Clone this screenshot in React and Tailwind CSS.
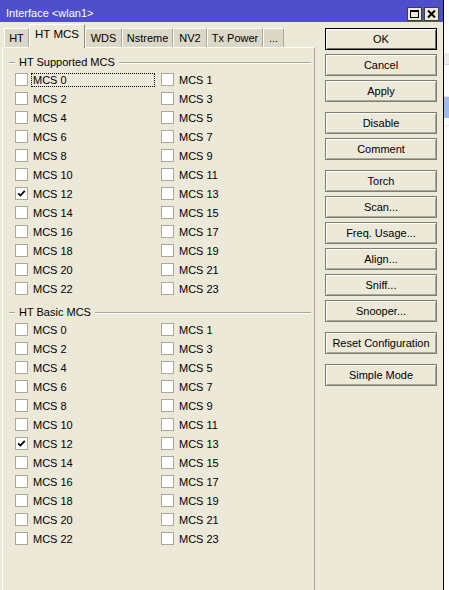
import React from 'react';

const tabs = [
  { label: 'HT', w: 'w-[25px]' },
  { label: 'HT MCS', w: 'w-[56px]', active: true },
  { label: 'WDS', w: 'w-[37px]' },
  { label: 'Nstreme', w: 'w-[51px]' },
  { label: 'NV2', w: 'w-[34px]' },
  { label: 'Tx Power', w: 'w-[56px]' },
  { label: '...', w: 'w-[21px]' },
];

const buttonGroups = [
  ['OK', 'Cancel', 'Apply'],
  ['Disable', 'Comment'],
  ['Torch', 'Scan...', 'Freq. Usage...', 'Align...', 'Sniff...', 'Snooper...'],
  ['Reset Configuration'],
  ['Simple Mode'],
];

const mcs = Array.from({ length: 24 }, (_, i) => i);

const CheckBox = ({ label, checked, focused }) => (
  <div className="flex items-center h-[19px]">
    <span className="w-[13px] h-[13px] shrink-0 border border-[#aca899] bg-white flex items-center justify-center">
      {checked && (
        <svg width="9" height="9" viewBox="0 0 9 9">
          <polyline points="1.2,4.3 3.4,6.6 7.8,1.9" fill="none" stroke="#000" strokeWidth="1.7" />
        </svg>
      )}
    </span>
    <span
      className={`ml-[3px] px-[1px] h-[14px] leading-[12px] border ${
        focused ? 'flex-1 mr-[6px] border-dotted border-black' : 'border-transparent'
      }`}
    >
      {label}
    </span>
  </div>
);

const Group = ({ title, checkedList, focusFirst }) => (
  <div>
    {/* etched header line */}
    <div className="h-[22px] pt-[7px] pl-[6px] pr-[3px] flex items-center">
      <span className="w-[6px] border-t border-[#aca899] shadow-[0_1px_0_#fff]" />
      <span className="mx-[4px] leading-[13px]">{title}</span>
      <span className="flex-1 border-t border-[#aca899] shadow-[0_1px_0_#fff]" />
    </div>
    <div className="grid grid-cols-[146px_1fr] pl-[12px]">
      {mcs.map((n) => (
        <CheckBox
          key={n}
          label={`MCS ${n}`}
          checked={checkedList.includes(n)}
          focused={focusFirst && n === 0}
        />
      ))}
    </div>
  </div>
);

const WinButton = ({ label, isDefault }) => (
  <button
    className={`h-[22px] w-[112px] bg-[#ece9d8] text-black text-[11px] leading-none flex items-center justify-center ${
      isDefault
        ? 'border border-black shadow-[inset_1px_1px_0_#fff,inset_-1px_-1px_0_#716f64]'
        : 'border border-[#7f7d70] shadow-[inset_1px_1px_0_#fff,inset_-1px_-1px_0_#aca899]'
    }`}
  >
    {label}
  </button>
);

export default function App() {
  return (
    <div className="w-[449px] h-[590px] flex overflow-hidden bg-white text-[11px] text-black font-['Liberation_Sans',Arial,sans-serif]">
      <div className="w-[443px] flex flex-col bg-[#ece9d8]">
        {/* Title bar */}
        <div className="h-[22px] shrink-0 bg-[#4f4fcb] flex items-end justify-between pl-[6px] pr-[4px] pb-[1px]">
          <span className="text-white leading-[13px] mb-[1px]">Interface &lt;wlan1&gt;</span>
          <div className="flex gap-[2px]">
            <span className="w-[15px] h-[14px] bg-[#ece9d8] border border-[#404040] flex items-center justify-center">
              <span className="w-[9px] h-[8px] border border-black border-t-2" />
            </span>
            <span className="w-[15px] h-[14px] bg-[#ece9d8] border border-[#404040] flex items-center justify-center">
              <svg width="9" height="8" viewBox="0 0 9 8">
                <path d="M1 0.5 L8 7.5 M8 0.5 L1 7.5" stroke="#000" strokeWidth="2" />
              </svg>
            </span>
          </div>
        </div>

        <div className="flex flex-1 min-h-0">
          {/* Left: tabs + panel */}
          <div className="w-[315px] flex flex-col pl-[2px]">
            <div className="h-[25px] shrink-0 flex items-end pl-[2px]">
              {tabs.map((t) =>
                t.active ? (
                  <div
                    key={t.label}
                    className={`${t.w} h-[24px] -mb-px relative z-10 bg-[#ece9d8] border-l border-t border-white border-r border-r-[#8d8b7e] flex items-center justify-center pb-[3px] text-[11.5px]`}
                  >
                    {t.label}
                  </div>
                ) : (
                  <div
                    key={t.label}
                    className={`${t.w} h-[19px] bg-[#dcd8c7] border-l border-t border-white border-r border-r-[#aca899] flex items-center justify-center pt-[1px]`}
                  >
                    {t.label}
                  </div>
                )
              )}
            </div>
            <div className="flex-1 border-t border-l border-white border-r border-r-[#aca899]">
              <Group title="HT Supported MCS" checkedList={[12]} focusFirst />
              <Group title="HT Basic MCS" checkedList={[12]} />
            </div>
          </div>

          {/* Right: buttons */}
          <div className="flex-1 pt-[6px] pl-[10px] flex flex-col gap-[10px]">
            {buttonGroups.map((g, i) => (
              <div key={i} className="flex flex-col gap-[4px]">
                {g.map((b) => (
                  <WinButton key={b} label={b} isDefault={b === 'OK'} />
                ))}
              </div>
            ))}
          </div>
        </div>
      </div>

      {/* window edge and the window behind */}
      <div className="w-px bg-black" />
      <div className="flex-1 flex flex-col bg-white">
        <div className="h-[53px]" />
        <div className="h-[12px] bg-[#ecebe6] border-b border-[#d6d4ca]" />
        <div className="h-[32px] border-b border-[#e8e8e8]" />
        <div className="h-[21px] bg-[#9fbde8]" />
        <div className="h-[8px] border-b border-[#e8e8e8]" />
      </div>
    </div>
  );
}
